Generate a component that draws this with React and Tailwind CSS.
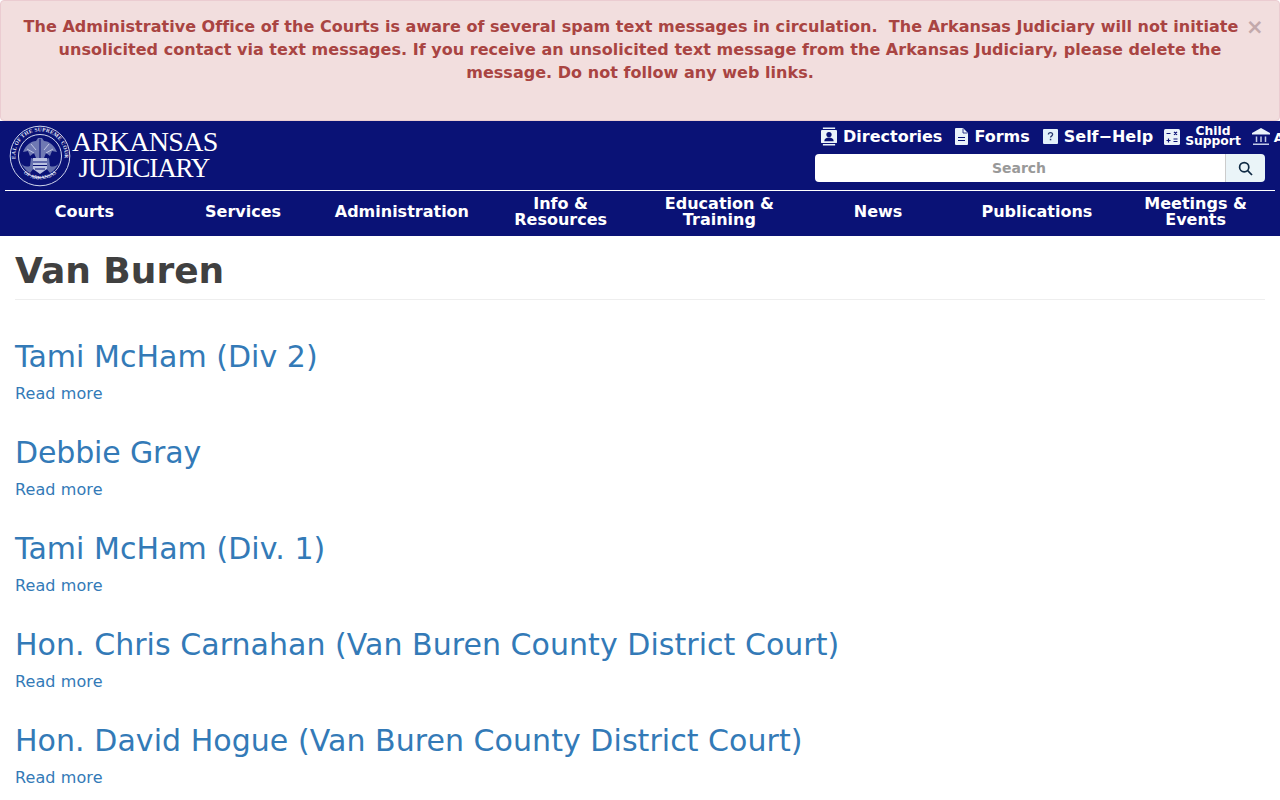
import React from "react";

function Seal() {
  return (
    <svg width="62" height="62" viewBox="0 0 62 62" className="shrink-0" aria-hidden="true">
      <defs>
        <path id="sealTop" d="M6.500 34A24.700 24.700 0 1 1 55.500 34" />
        <path id="sealBottom" d="M13 47A26 26 0 0 0 49 47" />
      </defs>
      <circle cx="31" cy="31" r="29.800" fill="none" stroke="#cfd5ec" strokeWidth="1" />
      <circle cx="31" cy="31" r="21.500" fill="none" stroke="#cfd5ec" strokeWidth="1" />
      <text fill="#e6e9f6" fontFamily="'Liberation Serif',serif" fontSize="5.400" fontWeight="700" letterSpacing=".25">
        <textPath href="#sealTop" startOffset="50%" textAnchor="middle">SEAL OF THE SUPREME COURT</textPath>
      </text>
      <text fill="#e6e9f6" fontFamily="'Liberation Serif',serif" fontSize="5" fontWeight="700">
        <textPath href="#sealBottom" startOffset="50%" textAnchor="middle">OF ARKANSAS</textPath>
      </text>
      <path d="M14 27c3-7 8-11 13-11l2-3h4l2 3c5 0 10 4 13 11l-5-1-2 5-4-3-2 5H27l-2-5-4 3-2-5z" fill="#6f79b3" />
      <path d="M12 38c3 4 6 4 9 3l1-8 3 1v9l-4 5c-4-2-7-6-9-10zM50 38c-3 4-6 4-9 3l-1-8-3 1v9l4 5c4-2 7-6 9-10z" fill="#6570ad" />
      <path d="M24 33h14v11l-7 5-7-5z" fill="#b9c0e0" />
      <path d="M24 37h14M24 40.500h14M26 44h10M31 14v19" stroke="#0a1276" strokeWidth="1.100" fill="none" />
      <path d="M18 24l7 4M44 24l-7 4M22 19l5 6M40 19l-5 6" stroke="#c8cee8" strokeWidth=".9" fill="none" />
    </svg>
  );
}

function TopLink({ icon, children, gap = "gap-[6px]" }) {
  return (
    <a className={`flex items-center ${gap} text-white font-bold text-[16px] leading-none shrink-0`}>
      {icon}
      <span>{children}</span>
    </a>
  );
}

const DirIcon = (
  <svg width="16" height="19" viewBox="0 0 17 19"><path d="M2 0h13v1.500H2zM2 17.500h13V19H2z" fill="#eaf2fa" /><rect y="2.500" width="17" height="14" rx="1" fill="#eaf2fa" /><circle cx="8.500" cy="7.500" r="2.800" fill="#0a1276" /><path d="M3.500 14.500c0-2.800 2.200-4 5-4s5 1.200 5 4z" fill="#0a1276" /></svg>
);
const FormIcon = (
  <svg width="13" height="17" viewBox="0 0 13 17"><path d="M1 0h7l5 5v11a1 1 0 0 1-1 1H1a1 1 0 0 1-1-1V1a1 1 0 0 1 1-1z" fill="#eaf2fa" /><path d="M8 .500V5h4.500" fill="none" stroke="#0a1276" strokeWidth=".8" /><path d="M3 9.500h7M3 12.500h7" stroke="#0a1276" strokeWidth="1.200" /></svg>
);
const HelpIcon = (
  <svg width="15" height="15" viewBox="0 0 15 15"><rect width="15" height="15" rx="1" fill="#e3f0fa" /><path d="M5.400 5.600c0-1.300.9-2 2.100-2s2.100.7 2.100 1.900c0 1.600-2.100 1.600-2.100 3.100" fill="none" stroke="#28386f" strokeWidth="1.300" /><rect x="6.800" y="9.800" width="1.500" height="1.500" fill="#28386f" /></svg>
);
const CalcIcon = (
  <svg width="16" height="16" viewBox="0 0 16 16"><rect width="16" height="16" rx="1.500" fill="#eaf2fa" /><path d="M2.500 4.500h4M10 2.800l3 3M13 2.800l-3 3M2.500 11.500h4M4.500 9.500v4M9.500 10h4M9.500 12.500h4" stroke="#0a1276" strokeWidth="1.200" /></svg>
);
const BankIcon = (
  <svg width="18" height="18" viewBox="0 0 18 18"><path d="M9 0l9 5v1.500H0V5z" fill="#eaf2fa" /><path d="M4.500 8.500v5.500M9 8.500v5.500M13.500 8.500v5.500" stroke="#c3cbe8" strokeWidth="1.500" /><rect x="1" y="15.500" width="16" height="1.500" fill="#c3cbe8" /></svg>
);

const nav = [
  ["Courts"],
  ["Services"],
  ["Administration"],
  ["Info &", "Resources"],
  ["Education &", "Training"],
  ["News"],
  ["Publications"],
  ["Meetings &", "Events"],
];
const items = [
  ["Tami McHam (Div 2)", "tracking-[0.03px]"],
  ["Debbie Gray", "tracking-[-0.15px]"],
  ["Tami McHam (Div. 1)", "tracking-[0.05px]"],
  ["Hon. Chris Carnahan (Van Buren County District Court)", "tracking-[0.04px]"],
  ["Hon. David Hogue (Van Buren County District Court)", "tracking-[0.05px]"],
];

export default function App() {
  return (
    <div className="h-[800px] w-[1280px] overflow-hidden bg-white font-['DejaVu_Sans',sans-serif]">
      <div className="h-[121px] border border-[#ebccd1] rounded-[4px] bg-[#f2dede] pt-[14px] px-[15px] text-center text-[#a94442] font-bold text-[16px] leading-[23px] tracking-[0.03px]">
        <span className="float-right h-[20px] w-[18px] -mt-[1px] text-left text-[21px] leading-[26px] text-[#c3a9ab]">×</span>
        <p className="whitespace-pre">
          The Administrative Office of the Courts is aware of several spam text messages in circulation.  The Arkansas Judiciary will not initiate
          <br />
          unsolicited contact via text messages. If you receive an unsolicited text message from the Arkansas Judiciary, please delete the
          <br />
          message. Do not follow any web links.
        </p>
      </div>

      <header className="h-[115px] bg-[#0a1276]">
        <div className="flex h-[70px] border-b border-white mx-[5px]">
          <div className="flex items-center pl-[4px] w-[300px]">
            <Seal />
            <div className="ml-[1px] -mt-[2px] text-white font-['Liberation_Serif',serif] text-center">
              <div className="text-[28px] leading-[26px] tracking-[-0.65px]">ARKANSAS</div>
              <div className="text-[27px] leading-[26px] pr-[2px] tracking-[-1.15px]">JUDICIARY</div>
            </div>
          </div>
          <div className="relative flex-1 overflow-hidden -mr-[5px]">
            <div className="flex items-center absolute left-[516px] top-[4px] w-[600px] h-[23px]">
              <TopLink icon={DirIcon}>Directories</TopLink>
              <div className="w-[13px]" />
              <TopLink icon={FormIcon} gap="gap-[6px]">Forms</TopLink>
              <div className="w-[13px]" />
              <TopLink icon={HelpIcon} gap="gap-[6px]">Self−Help</TopLink>
              <div className="w-[11px]" />
              <a className="flex items-center gap-[5px] text-white font-bold shrink-0">
                {CalcIcon}
                <span className="text-[12.300px] leading-[10px] text-center -mt-[1px]">Child<br />Support</span>
              </a>
              <div className="w-[11px]" />
              <TopLink icon={BankIcon} gap="gap-[4px]"><span className="text-[13px]">AOC</span></TopLink>
            </div>
            <div className="absolute left-[510px] top-[33px] flex h-[28px] w-[450px]">
              <div className="flex-1 rounded-l-[4px] bg-white pr-[2px] text-center text-[14px] font-bold leading-[28px] text-[#999999]">Search</div>
              <div className="flex w-[40px] items-center justify-center rounded-r-[4px] border-l border-[#cccccc] bg-[#eaf4f8]">
                <svg width="15" height="15" viewBox="0 0 15 15" fill="none" stroke="#0f2a44" strokeWidth="1.700"><circle cx="6.200" cy="6.200" r="4.600" /><path d="M9.700 9.700l4.300 4.300" /></svg>
              </div>
            </div>
          </div>
        </div>
        <nav className="grid grid-cols-8 mx-[5px] h-[42px] items-center">
          {nav.map((n) => (
            <a key={n[0]} className="block min-w-0 text-center text-white font-bold text-[16px] leading-[16px]">
              {n.map((l) => (
                <div key={l}>{l}</div>
              ))}
            </a>
          ))}
        </nav>
      </header>

      <main className="px-[15px]">
        <h1 className="mt-[14px] border-b border-[#eeeeee] pb-[7px] text-[36px] font-bold leading-[42px] text-[#404040]">Van Buren</h1>
        <div className="mt-[40px] flex flex-col gap-[31px]">
          {items.map(([t, c]) => (
            <article key={t}>
              <h2 className={`text-[30px] leading-[33px] text-[#337ab7] ${c}`}>{t}</h2>
              <a className="mt-[9px] block text-[16px] leading-[23px] tracking-[0.1px] text-[#337ab7]">Read more</a>
            </article>
          ))}
        </div>
      </main>
    </div>
  );
}
